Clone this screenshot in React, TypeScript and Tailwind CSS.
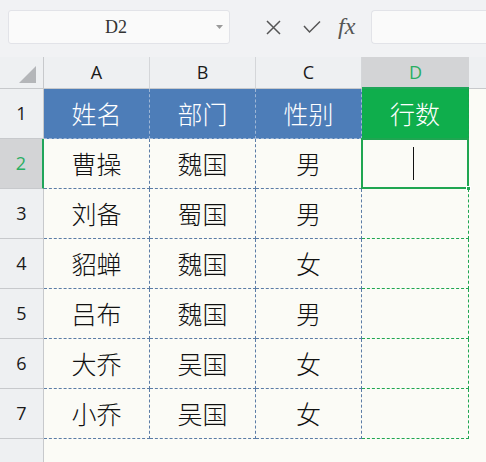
import React from 'react';

const rows = [
  ['曹操', '魏国', '男'],
  ['刘备', '蜀国', '男'],
  ['貂蝉', '魏国', '女'],
  ['吕布', '魏国', '男'],
  ['大乔', '吴国', '女'],
  ['小乔', '吴国', '女'],
];

const cjk = { fontFamily: '"Noto Sans CJK SC", sans-serif' };
const ui = { fontFamily: '"Open Sans", "Noto Sans", sans-serif' };

export default function App() {
  return (
    <div className="w-[486px] h-[462px] overflow-hidden bg-[#fbfbf6] select-none">
      {/* Formula bar */}
      <div className="h-[57px] bg-[#f1f2f4] flex items-start pt-[10px]">
        <div className="ml-2 w-[222px] h-[34px] rounded-[3px] border border-[#e2e3e8] bg-[#fafafa] flex items-center relative">
          <span
            className="flex-1 text-center text-[18px] text-[#333] pr-[6px]"
            style={{ fontFamily: '"Liberation Serif", serif' }}
          >
            D2
          </span>
          <svg className="absolute right-[6px] top-[14px]" width="7" height="5" viewBox="0 0 7 5">
            <polygon points="0,0 7,0 3.5,4" fill="#9a9a9a" />
          </svg>
        </div>
        <div className="flex items-center h-[34px] ml-[36px]">
          <svg width="15" height="15" viewBox="0 0 15 15">
            <path d="M1 1 L14 14 M14 1 L1 14" stroke="#555" strokeWidth="1.5" fill="none" />
          </svg>
          <svg className="ml-[22px]" width="18" height="14" viewBox="0 0 18 14">
            <path d="M1 6 L6.5 12 L17 1.5" stroke="#555" strokeWidth="1.5" fill="none" />
          </svg>
          <span
            className="ml-[17px] italic text-[24px] text-[#555] leading-none -mt-[2px]"
            style={{ fontFamily: '"Liberation Serif", serif' }}
          >
            fx
          </span>
        </div>
        <div className="ml-[16px] flex-1 h-[34px] rounded-l-[4px] border border-r-0 border-[#e2e3e8] bg-[#fafafa]" />
      </div>

      {/* Sheet grid */}
      <div className="grid grid-cols-[44px_106px_106px_106px_107px_1fr] grid-rows-[32px_repeat(8,50px)]">
        {/* Column headers */}
        <div className="bg-[#eef0f2] border-r border-b border-[#c7c9cc] flex items-end justify-end pr-[7px] pb-[5px]">
          <svg width="17" height="17" viewBox="0 0 17 17">
            <polygon points="17,0 17,17 0,17" fill="#b4b6b9" />
          </svg>
        </div>
        {['A', 'B', 'C'].map((c) => (
          <div
            key={c}
            className="bg-[#eef0f2] border-r border-b border-[#d4d6d9] border-b-[#c7c9cc] flex items-center justify-center text-[18px] text-[#1a1a1a]"
            style={ui}
          >
            {c}
          </div>
        ))}
        <div
          className="bg-[#d3d4d6] border-b-2 border-[#20a55a] flex items-center justify-center text-[18px] text-[#2aae62]"
          style={ui}
        >
          D
        </div>
        <div className="bg-[#eef0f2] border-b border-[#c7c9cc]" />

        {/* Row 1: headers */}
        <div className="bg-[#eef0f2] border-r border-b border-[#c7c9cc] flex items-center justify-center text-[18px] text-[#1a1a1a]" style={ui}>
          1
        </div>
        {['姓名', '部门', '性别'].map((h) => (
          <div
            key={h}
            className="bg-[#4d7db8] border-r border-b border-dashed border-[#9fb7d6] flex items-center justify-center text-[25px] font-light text-white"
            style={cjk}
          >
            {h}
          </div>
        ))}
        <div className="bg-[#0fae4c] border-r border-b border-dashed border-[#1a9f49] flex items-center justify-center text-[25px] font-light text-white" style={cjk}>
          行数
        </div>
        <div />

        {rows.map((r, i) => (
          <React.Fragment key={i}>
            <div
              className={
                i === 0
                  ? 'bg-[#d3d4d6] border-r-2 border-r-[#20a55a] border-b border-b-[#c7c9cc] flex items-center justify-center text-[18px] text-[#2aae62]'
                  : 'bg-[#eef0f2] border-r border-b border-[#c7c9cc] flex items-center justify-center text-[18px] text-[#1a1a1a]'
              }
              style={ui}
            >
              {i + 2}
            </div>
            {r.map((v, j) => (
              <div
                key={j}
                className="border-r border-b border-dashed border-[#5b7ca6] flex items-center justify-center text-[25px] font-light text-[#111]"
                style={cjk}
              >
                {v}
              </div>
            ))}
            <div className="relative border-r border-b border-dashed border-[#1fa651]">
              {i === 0 && (
                <div className="absolute -left-px -top-px w-[108px] h-[51px] border-2 border-[#1fa651]">
                  <div className="absolute left-[50px] top-[7px] w-px h-[33px] bg-[#111]" />
                  <div className="absolute -right-[4px] -bottom-[4px] w-[5px] h-[5px] bg-[#1fa651] border border-white" />
                </div>
              )}
            </div>
            <div />
          </React.Fragment>
        ))}

        {/* Row 8 (partial) */}
        <div className="bg-[#eef0f2] border-r border-[#c7c9cc]" />
        <div className="col-span-5" />
      </div>
    </div>
  );
}
